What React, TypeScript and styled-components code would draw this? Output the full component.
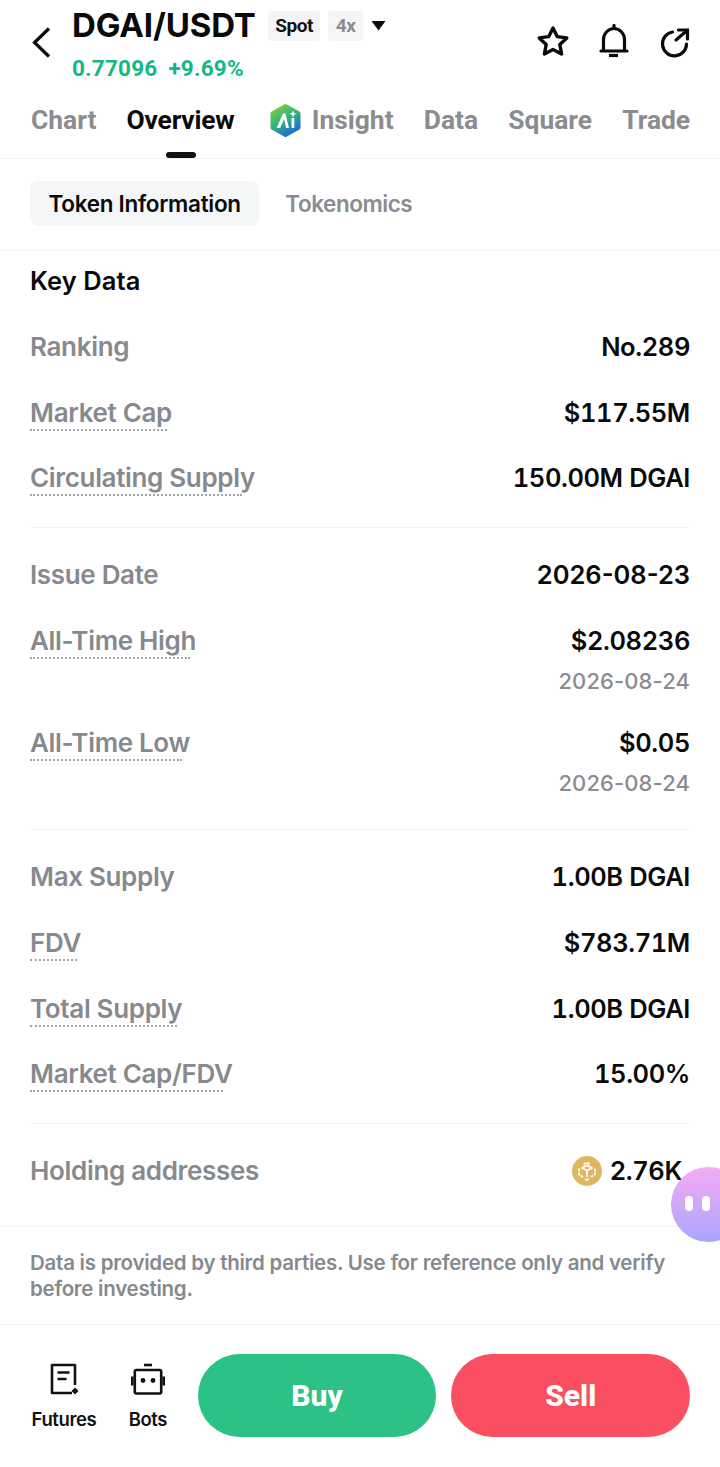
import React from 'react';
import styled, { createGlobalStyle } from 'styled-components';

const Global = createGlobalStyle`
  html, body { margin: 0; padding: 0; background: #fff; }
  body { font-family: Inter, "Liberation Sans", sans-serif; }
  * { box-sizing: border-box; }
`;
const Page = styled.div`
  width: 720px; height: 1467px; background: #fff; position: relative; overflow: hidden;
  display: flex; flex-direction: column;
`;
const TopBar = styled.header`
  height: 95px; display: flex; align-items: flex-start; padding: 0 30px;
`;
const Back = styled.svg`
  width: 22px; height: 34px; margin-top: 25px; flex: none;
`;
const TitleCol = styled.div`
  margin-left: 20px; display: flex; flex-direction: column; flex: 1;
`;
const TitleRow = styled.div`
  display: flex; align-items: center; height: 50px;
`;
const Pair = styled.span`
  font: 700 33px/40px Inter, sans-serif; letter-spacing: -0.12px; color: #0a0a0a; margin-top: -1px;
`;
const Tag = styled.span<{ $muted?: boolean }>`
  height: 30px; margin-top: 1px; padding: 0 7.5px; border-radius: 3px; background: #f5f5f5;
  display: flex; align-items: center; margin-left: ${p => (p.$muted ? 8 : 12)}px;
  font: 700 19px/30px Roboto, sans-serif; letter-spacing: -0.5px;
  color: ${p => (p.$muted ? '#8a8c90' : '#111')};
`;
const Caret = styled.svg`
  width: 15px; height: 11px; margin-left: 8px;
`;
const PriceRow = styled.div`
  display: flex; gap: 11px; margin-top: 4px; font: 700 22.5px/28px Roboto, sans-serif; color: #12b886; letter-spacing: 0.2px;
`;
const Actions = styled.div`
  display: flex; gap: 28px; margin-top: 24px;
`;
const Tabs = styled.nav`
  height: 64px; border-bottom: 1px solid #f0f1f2; padding: 0 0 0 31px; display: flex; gap: 30.2px;
  align-items: flex-start;
`;
const Tab = styled.div<{ $active?: boolean; $logo?: boolean }>`
  display: flex; align-items: center; height: 50px; position: relative;
  padding-left: ${p => (p.$logo ? 4 : 0)}px;
  font: 700 26.4px/50px Roboto, sans-serif; color: ${p => (p.$active ? '#0a0a0a' : '#8a8c90')};
  ${p => p.$active && `
    letter-spacing: -0.2px;
    &::after { content: ''; position: absolute; left: 39px; top: 57px; width: 30px; height: 6px; border-radius: 3px; background: #111; }
  `}
`;
const SubTabs = styled.div`
  height: 92px; border-bottom: 1px solid #f3f4f5; padding: 22px 30px 0; display: flex; gap: 7.5px; align-items: flex-start;
`;
const SubTab = styled.div<{ $active?: boolean }>`
  height: 45px; padding: 0 18.5px; border-radius: 8px; display: flex; align-items: center;
  font: 600 22.5px/45px Inter, sans-serif; letter-spacing: ${p => (p.$active ? '-0.3px' : '-0.45px')};
  background: ${p => (p.$active ? '#f5f6f7' : 'transparent')};
  color: ${p => (p.$active ? '#0a0a0a' : '#8a8c90')};
`;
const Body = styled.main`
  padding: 0 30px; display: flex; flex-direction: column;
`;
const Heading = styled.h2`
  margin: 12px 0 0; font: 600 25.5px/36px Inter, sans-serif; letter-spacing: 0.1px; color: #0a0a0a;
`;
const Group = styled.section<{ $line?: boolean; $last?: boolean }>`
  padding: ${p => (p.$line ? 28 : 29)}px 0 ${p => (p.$last ? 8 : 0)}px;
  margin-top: ${p => (p.$line ? 2 : 0)}px;
  border-top: ${p => (p.$line ? '1px solid #f1f2f3' : 'none')};
`;
const Row = styled.div`
  display: flex; justify-content: space-between; align-items: flex-start; padding-bottom: 27.7px;
`;
const Label = styled.div`
  font: 600 26px/38px Inter, sans-serif; letter-spacing: -0.33px; color: #86898d;
  height: 38px;
`;
const Dotted = styled.span<{ $w: number }>`
  display: block;
  &::after { content: ''; display: block; margin-top: -3px; width: ${p => p.$w}px; border-top: 2px dotted #a0a3a7; }
`;
const ValueCol = styled.div`
  display: flex; flex-direction: column; align-items: flex-end;
`;
const Value = styled.div<{ $inset?: number; $date?: boolean }>`
  display: flex; align-items: center; gap: 8px; padding-right: ${p => p.$inset ?? 0}px;
  font: 600 25.5px/38px Inter, sans-serif; color: #0a0a0a; height: 38px;
  font-feature-settings: ${p => (p.$date ? 'normal' : "'tnum'")};
  letter-spacing: ${p => (p.$date ? '0' : '-0.4px')};
`;
const SubValue = styled.div`
  font: 500 22px/30px Inter, sans-serif; letter-spacing: 0.1px; color: #8a8c90; margin-top: 6px; margin-bottom: 1px;
`;
const Note = styled.p`
  margin: 0; padding: 23px 30px 0; height: 99px; border-top: 1px solid #f3f4f5; border-bottom: 1px solid #f3f4f5;
  font: 600 20.5px/26px Inter, sans-serif; letter-spacing: -0.25px; color: #86898d;
`;
const Footer = styled.footer`
  display: flex; align-items: flex-start; padding: 29px 30px 0 30px;
`;
const Tool = styled.div<{ $w: number; $ml?: number }>`
  width: ${p => p.$w}px; margin-left: ${p => p.$ml ?? 0}px; margin-top: 9px; display: flex; flex-direction: column; align-items: center; gap: 12px;
  font: 600 18.5px/24px Inter, sans-serif; letter-spacing: -0.4px; color: #111;
`;
const Trade = styled.div<{ $bg: string; $ml: number }>`
  width: 239px; height: 83px; padding-top: 1px; border-radius: 42px; background: ${p => p.$bg}; margin-left: ${p => p.$ml}px;
  display: flex; align-items: center; justify-content: center; color: #fff;
  font: 800 30px/83px Roboto, sans-serif;
`;
const Bubble = styled.div`
  position: absolute; left: 671px; top: 1167px; width: 75px; height: 75px; border-radius: 50%;
  background: linear-gradient(180deg, #f5abf4 0%, #a9a6fb 100%);
  display: flex; gap: 9.5px; padding: 29px 0 0 14px;
  & > i { display: block; width: 7.5px; height: 15px; border-radius: 4px; background: #fff; }
`;

const Star = () => (
  <svg width="34" height="34" viewBox="0 0 34 34" fill="none" stroke="#0a0a0a" strokeWidth="3.4" strokeLinejoin="round">
    <path d="M17 4l4.2 8.6 9.6 1.3-7 6.6 1.8 9.5-8.6-4.6-8.6 4.6 1.8-9.5-7-6.6 9.6-1.3z" />
  </svg>
);
const Bell = () => (
  <svg width="32" height="34" viewBox="0 0 32 34" fill="none" stroke="#0a0a0a" strokeWidth="3.2">
    <path d="M3 27h26" strokeLinecap="round" />
    <path d="M5.5 27V15.5C5.5 9.5 10.5 4.5 16 4.5s10.5 5 10.5 11V27" />
    <path d="M16 1.5v3" strokeLinecap="round" />
    <path d="M11 31.5h9" />
  </svg>
);
const Share = () => (
  <svg width="32" height="34" viewBox="0 0 32 34" fill="none" stroke="#0a0a0a" strokeWidth="3.2" strokeLinecap="round">
    <path d="M14.5 8A12 12 0 1 0 28.5 20" />
    <path d="M18 16L29 6.5" />
    <path d="M20.5 6H29.5V15" />
  </svg>
);
const AiLogo = () => (
  <svg width="33" height="35" viewBox="0 0 33 35" style={{ marginRight: 10 }}>
    <defs>
      <linearGradient id="aig" x1="0.15" y1="0" x2="0.7" y2="1">
        <stop offset="0" stopColor="#8bd13a" />
        <stop offset="0.5" stopColor="#2fb37e" />
        <stop offset="1" stopColor="#1f5fe0" />
      </linearGradient>
    </defs>
    <path d="M16.5 0.8L30 8.2a3 3 0 0 1 1.5 2.6v13.4a3 3 0 0 1-1.5 2.6L16.5 34.2 3 26.8a3 3 0 0 1-1.5-2.6V10.8A3 3 0 0 1 3 8.2z" fill="url(#aig)" />
    <path d="M7.5 25L14 10.5h2.4L20 25h-3l-1.8-9-4 9z" fill="#fff" />
    <path d="M22.5 15h2.8v10h-2.8z" fill="#fff" />
    <path d="M24 7.5l1 2.5 2.5 1-2.5 1-1 2.5-1-2.5-2.5-1 2.5-1z" fill="#fff" />
  </svg>
);
const CoinIcon = () => (
  <svg width="30" height="30" viewBox="0 0 30 30">
    <circle cx="15" cy="15" r="15" fill="#e1b661" />
    <g fill="none" stroke="#fff" strokeWidth="1.7" strokeLinejoin="round">
      <path d="M11.5 8.5L15 6.5l3.5 2" strokeDasharray="3 1" />
      <path d="M10 12l5 2.8 5-2.8-5-2.8z" />
      <path d="M15 15v6" />
      <path d="M7 12.5v6l4 2.5M23 12.5v6l-4 2.5" strokeDasharray="3 1" />
      <path d="M13 23l2 1 2-1" />
    </g>
  </svg>
);
const Futures = () => (
  <svg width="30" height="32" viewBox="0 0 30 32" fill="none" stroke="#111" strokeWidth="2.6">
    <path d="M26 22V2H3v28h20" strokeLinejoin="round" />
    <path d="M8.5 9.5h12M8.5 16h9" />
    <path d="M26 24.6l3.5 3.5-3.5 3.5-3.5-3.5z" fill="#111" stroke="none" />
  </svg>
);
const Bots = () => (
  <svg width="34" height="32" viewBox="0 0 34 32" fill="none" stroke="#111" strokeWidth="2.6">
    <path d="M13 2h8" />
    <rect x="3.8" y="7" width="26.4" height="23.5" rx="1.5" />
    <path d="M1.3 13.5v9M32.7 13.5v9" />
    <circle cx="12" cy="17.5" r="2.4" fill="#111" stroke="none" />
    <circle cx="22" cy="17.5" r="2.4" fill="#111" stroke="none" />
  </svg>
);

const group1 = [
  { k: 'Ranking', v: 'No.289' },
  { k: 'Market Cap', v: '$117.55M', u: 137 },
  { k: 'Circulating Supply', v: '150.00M DGAI', u: 212 },
];
const group3 = [
  { k: 'Max Supply', v: '1.00B DGAI' },
  { k: 'FDV', v: '$783.71M', u: 47 },
  { k: 'Total Supply', v: '1.00B DGAI', u: 147 },
  { k: 'Market Cap/FDV', v: '15.00%', u: 193 },
];

type ItemProps = { k: string; v: React.ReactNode; u?: number; sub?: string; inset?: number; date?: boolean };
const Item = ({ k, v, u, sub, inset, date }: ItemProps) => (
  <Row>
    <Label>{u ? <Dotted $w={u}>{k}</Dotted> : k}</Label>
    <ValueCol>
      <Value $inset={inset} $date={date}>{v}</Value>
      {sub && <SubValue>{sub}</SubValue>}
    </ValueCol>
  </Row>
);

export default function App() {
  return (
    <Page>
      <Global />
      <TopBar>
        <Back viewBox="0 0 22 34" fill="none" stroke="#0a0a0a" strokeWidth="3.2">
          <path d="M19 3.5L4.5 17.5 19 31.5" />
        </Back>
        <TitleCol>
          <TitleRow>
            <Pair>DGAI/USDT</Pair>
            <Tag>Spot</Tag>
            <Tag $muted>4x</Tag>
            <Caret viewBox="0 0 15 11"><path d="M0.5 1h14L7.5 10.5z" fill="#0a0a0a" /></Caret>
          </TitleRow>
          <PriceRow><span>0.77096</span><span>+9.69%</span></PriceRow>
        </TitleCol>
        <Actions><Star /><Bell /><Share /></Actions>
      </TopBar>
      <Tabs>
        <Tab>Chart</Tab>
        <Tab $active>Overview</Tab>
        <Tab $logo><AiLogo />Insight</Tab>
        <Tab>Data</Tab>
        <Tab>Square</Tab>
        <Tab>Trade</Tab>
      </Tabs>
      <SubTabs>
        <SubTab $active>Token Information</SubTab>
        <SubTab>Tokenomics</SubTab>
      </SubTabs>
      <Body>
        <Heading>Key Data</Heading>
        <Group>
          {group1.map(r => <Item key={r.k} {...r} />)}
        </Group>
        <Group $line>
          <Item k="Issue Date" v="2026-08-23" date />
          <Item k="All-Time High" v="$2.08236" u={160} sub="2026-08-24" />
          <Item k="All-Time Low" v="$0.05" u={152} sub="2026-08-24" />
        </Group>
        <Group $line>
          {group3.map(r => <Item key={r.k} {...r} />)}
        </Group>
        <Group $line $last>
          <Item k="Holding addresses" v={<><CoinIcon />2.76K</>} inset={8} />
        </Group>
      </Body>
      <Note>Data is provided by third parties. Use for reference only and verify before investing.</Note>
      <Footer>
        <Tool $w={68}><Futures />Futures</Tool>
        <Tool $w={68} $ml={16}><Bots />Bots</Tool>
        <Trade $bg="#2cc286" $ml={16}>Buy</Trade>
        <Trade $bg="#f94f60" $ml={15}>Sell</Trade>
      </Footer>
      <Bubble><i /><i /></Bubble>
    </Page>
  );
}
